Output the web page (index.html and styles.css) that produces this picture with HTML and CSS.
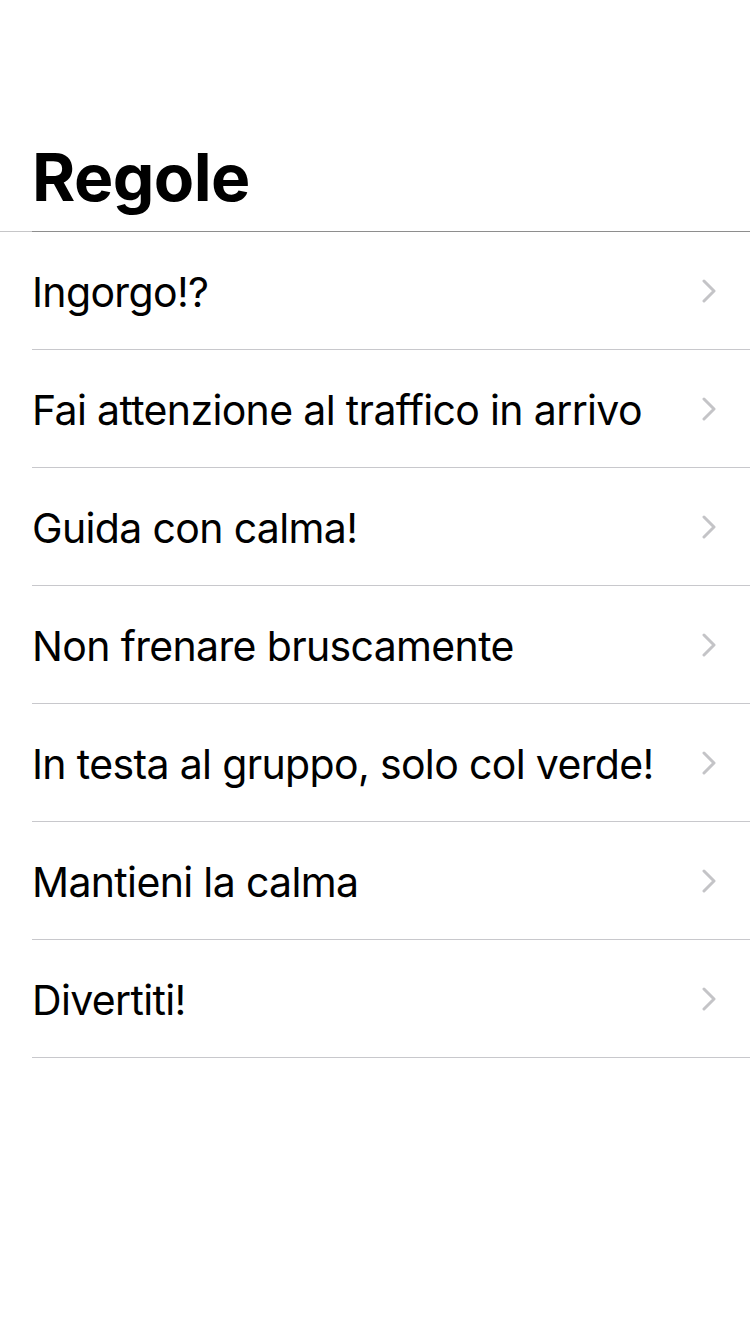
FILE: index.html
```html
<!DOCTYPE html>
<html lang="it">
<head>
<meta charset="utf-8">
<title>Regole</title>
<link rel="stylesheet" href="styles.css">
</head>
<body>
<div class="screen">
  <header class="nav">
    <h1 class="title">Regole</h1>
  </header>
  <ul class="list">
    <li class="row"><span class="label">Ingorgo!?</span><svg class="chev" viewBox="0 0 14 24"><path d="M2 2 L12 12 L2 22"/></svg></li>
    <li class="row"><span class="label">Fai attenzione al traffico in arrivo</span><svg class="chev" viewBox="0 0 14 24"><path d="M2 2 L12 12 L2 22"/></svg></li>
    <li class="row"><span class="label">Guida con calma!</span><svg class="chev" viewBox="0 0 14 24"><path d="M2 2 L12 12 L2 22"/></svg></li>
    <li class="row"><span class="label">Non frenare bruscamente</span><svg class="chev" viewBox="0 0 14 24"><path d="M2 2 L12 12 L2 22"/></svg></li>
    <li class="row"><span class="label">In testa al gruppo, solo col verde!</span><svg class="chev" viewBox="0 0 14 24"><path d="M2 2 L12 12 L2 22"/></svg></li>
    <li class="row"><span class="label">Mantieni la calma</span><svg class="chev" viewBox="0 0 14 24"><path d="M2 2 L12 12 L2 22"/></svg></li>
    <li class="row"><span class="label">Divertiti!</span><svg class="chev" viewBox="0 0 14 24"><path d="M2 2 L12 12 L2 22"/></svg></li>
  </ul>
</div>
</body>
</html>
```
FILE: styles.css
```css
html, body {
  margin: 0;
  padding: 0;
  background: #ffffff;
}
body {
  font-family: Inter, "Liberation Sans", sans-serif;
  color: #000000;
  width: 750px;
  height: 1334px;
  overflow: hidden;
}
.screen {
  width: 750px;
}
.nav {
  height: 232px;
  box-sizing: border-box;
  padding: 136px 0 0 32px;
  border-bottom: 1px solid #c6c6c8;
  position: relative;
}
.nav::after {
  content: "";
  position: absolute;
  left: 32px;
  right: 0;
  bottom: -1px;
  height: 1px;
  background: #8e8e8e;
}
.title {
  margin: 0;
  font-size: 66px;
  font-weight: 700;
  line-height: 82px;
  letter-spacing: -0.6px;
}
.list {
  list-style: none;
  margin: 0;
  padding: 0 0 0 32px;
}
.row {
  height: 117px;
  box-sizing: content-box;
  border-bottom: 1px solid #c8c8cc;
  display: flex;
  align-items: center;
  justify-content: space-between;
  padding-right: 34px;
}
.label {
  font-size: 41px;
  line-height: 48px;
  letter-spacing: -0.65px;
  padding-top: 3px;
}
.chev {
  width: 14px;
  height: 24px;
  fill: none;
  stroke: #c4c4c7;
  stroke-width: 3px;
  stroke-linecap: round;
  stroke-linejoin: round;
}
```
